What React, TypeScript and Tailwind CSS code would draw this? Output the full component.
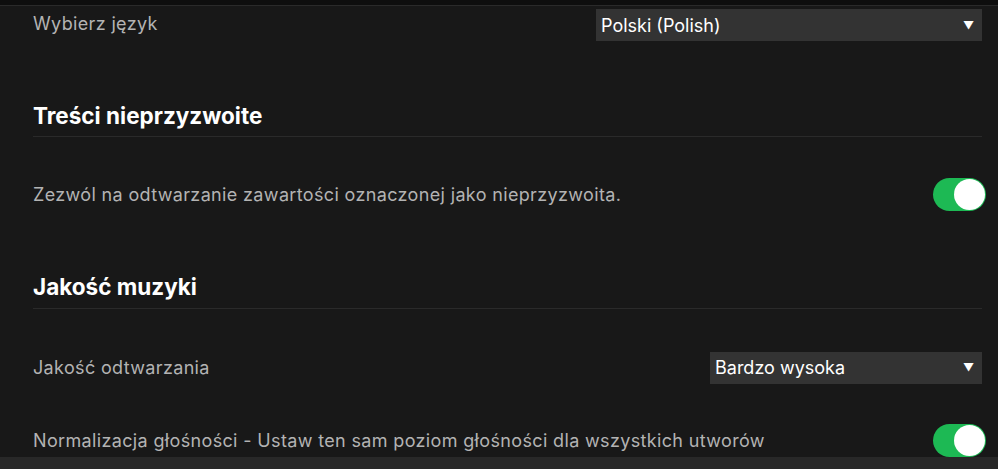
import React from "react";

const font = { fontFamily: "Inter, 'Noto Sans', sans-serif" };

function Toggle() {
  return (
    <div className="relative w-[53px] h-[33px] rounded-full bg-[#1db954] shrink-0 mr-[-4px]">
      <div className="absolute right-[1px] top-[1px] w-[31px] h-[31px] rounded-full bg-white" />
    </div>
  );
}

function Select({ label, width }: { label: string; width: string }) {
  return (
    <div className={`${width} h-[32px] bg-[#333333] flex items-center justify-between pl-[5px] pr-[8px]`}>
      <span className="text-white text-[18px]">{label}</span>
      <span className="text-white text-[11px]">▼</span>
    </div>
  );
}

export default function App() {
  return (
    <div className="w-[998px] h-[469px] bg-[#181818] flex flex-col overflow-hidden" style={font}>
      <div className="h-[5px] bg-[#0e0e0e] shrink-0" />
      <div className="h-[1px] bg-[#2a2a2a] shrink-0" />
      <div className="flex-1 flex flex-col pl-[33px] pr-[16px]">
        <div className="mt-[3px] h-[32px] flex items-center justify-between">
          <span className="text-[#b3b3b3] text-[18px] tracking-[0.35px] -mt-[3px]">Wybierz język</span>
          <Select label="Polski (Polish)" width="w-[386px]" />
        </div>
        <div className="mt-[61px] h-[28px] leading-[28px] text-white text-[22.5px] font-bold">
          Treści nieprzyzwoite
        </div>
        <div className="mt-[6px] h-px bg-[#2a2a2a]" />
        <div className="mt-[41px] h-[33px] flex items-center justify-between">
          <span className="text-[#b3b3b3] text-[18px] tracking-[0.35px]">
            Zezwól na odtwarzanie zawartości oznaczonej jako nieprzyzwoita.
          </span>
          <Toggle />
        </div>
        <div className="mt-[62px] h-[28px] leading-[28px] text-white text-[22.5px] font-bold">
          Jakość muzyki
        </div>
        <div className="mt-[7px] h-px bg-[#2a2a2a]" />
        <div className="mt-[42px] h-[33px] flex items-center justify-between">
          <span className="text-[#b3b3b3] text-[18px] tracking-[0.35px]">Jakość odtwarzania</span>
          <Select label="Bardzo wysoka" width="w-[272px]" />
        </div>
        <div className="mt-[40px] h-[33px] flex items-center justify-between">
          <span className="text-[#b3b3b3] text-[18px] tracking-[0.35px]">
            Normalizacja głośności - Ustaw ten sam poziom głośności dla wszystkich utworów
          </span>
          <Toggle />
        </div>
      </div>
      <div className="h-[12px] bg-[#282828] shrink-0" />
    </div>
  );
}
